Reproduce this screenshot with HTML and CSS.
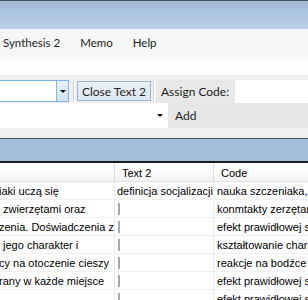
FILE: index.html
```html
<!DOCTYPE html>
<html>
<head>
<meta charset="utf-8">
<link rel="stylesheet" href="styles.css">
</head>
<body>
<div class="app">
  <div class="titlebar"></div>
  <div class="menubar">
    <span class="menu m1">Synthesis 2</span>
    <span class="menu m2">Memo</span>
    <span class="menu m3">Help</span>
  </div>
  <div class="blank"></div>
  <div class="tb1">
    <div class="combo">
      <div class="combo-field"></div>
      <div class="combo-btn"><span class="arrow"></span></div>
    </div>
    <div class="sep"></div>
    <div class="btn">Close Text 2</div>
    <div class="sep2"></div>
    <div class="label">Assign Code:</div>
    <div class="fill"></div>
  </div>
  <div class="tb2">
    <div class="combo2"><span class="arrow a2"></span></div>
    <div class="add">Add</div>
  </div>
  <div class="strip"></div>
  <div class="band"></div>
  <div class="grid">
    <div class="hrow">
      <div class="hc c1"></div>
      <div class="hc c2">Text 2</div>
      <div class="hc c3">Code</div>
    </div>
    <div class="row"><div class="cell c1 clip">iaki uczą się</div><div class="cell c2">definicja socjalizacji</div><div class="cell c3">nauka szczeniaka, z</div></div>
    <div class="row"><div class="cell c1">&nbsp;zwierzętami oraz</div><div class="cell c2"><span class="bar"></span></div><div class="cell c3">konmtakty zerzętami</div></div>
    <div class="row"><div class="cell c1 clip">zenia. Doświadczenia z</div><div class="cell c2"><span class="bar"></span></div><div class="cell c3">efekt prawidłowej s</div></div>
    <div class="row"><div class="cell c1">&nbsp;jego charakter i</div><div class="cell c2"><span class="bar"></span></div><div class="cell c3">kształtowanie charak</div></div>
    <div class="row"><div class="cell c1 clip">cy na otoczenie cieszy</div><div class="cell c2"><span class="bar"></span></div><div class="cell c3">reakcje na bodźce</div></div>
    <div class="row"><div class="cell c1 clip">rany w każde miejsce</div><div class="cell c2"><span class="bar"></span></div><div class="cell c3">efekt prawidłowej s</div></div>
    <div class="row"><div class="cell c1"></div><div class="cell c2"><span class="bar"></span></div><div class="cell c3">efekt prawidłowej s</div></div>
  </div>
</div>
</body>
</html>
```
FILE: styles.css
```css
* { box-sizing: border-box; }
html, body { margin: 0; padding: 0; }
body { width: 308px; height: 300px; overflow: hidden; background: #fff; }
.app { width: 308px; display: flex; flex-direction: column; }

.titlebar {
  height: 29px;
  border-top: 1px solid #46525c;
  background: linear-gradient(#9fbad7, #aac3df 40%, #bcd1e9);
}
.menubar {
  height: 24px;
  background: #f5f6f7;
  display: flex;
  align-items: center;
  padding-top: 2px;
  font-family: "Lato", "Open Sans", sans-serif;
  font-size: 11.5px;
  color: #1e1e1e;
}
.menu { display: block; }
.m1 { margin-left: 3px; }
.m2 { margin-left: 20px; }
.m3 { margin-left: 20px; }

.blank {
  height: 22px;
  background: linear-gradient(#f6f6f6, #fcfcfc 40%, #fff);
}

.tb1 {
  height: 28px;
  background: #f0f0f0;
  padding-top: 5px;
  display: flex;
  align-items: flex-start;
  font-family: "Lato", "Open Sans", sans-serif;
  font-size: 12px;
  color: #1e1e1e;
}
.combo {
  width: 69px;
  height: 22px;
  display: flex;
  border: 1px solid #7eb4ea;
  border-left: none;
  background: #fff;
}
.combo-field { flex: 1; }
.combo-btn {
  width: 12px;
  border-left: 1px solid #7eb4ea;
  background: linear-gradient(#e6f0fa, #cfe2f6);
  display: flex;
  align-items: center;
  justify-content: center;
}
.arrow {
  width: 0; height: 0;
  border-left: 3px solid transparent;
  border-right: 3px solid transparent;
  border-top: 3px solid #111;
}
.sep {
  width: 2px;
  height: 20px;
  margin: 1px 2px 0 4px;
  border-left: 1px solid #d0d0d0;
  border-right: 1px solid #fff;
}
.btn {
  width: 74px;
  height: 20px;
  margin-top: 1px;
  border: 1px solid #9ab5d3;
  background: linear-gradient(#eaf0f7, #dde7f2);
  display: flex;
  align-items: center;
  justify-content: center;
  padding-top: 1px;
}
.sep2 {
  width: 2px;
  height: 20px;
  margin: 1px 1px 0 2px;
  border-left: 1px solid #d0d0d0;
  border-right: 1px solid #fff;
}
.label {
  width: 79px;
  height: 23px;
  background: #e8e8e8;
  display: flex;
  align-items: center;
  padding-left: 5px;
}
.fill {
  flex: 1;
  height: 23px;
  background: #fff;
}

.tb2 {
  height: 25px;
  display: flex;
  font-family: "Lato", "Open Sans", sans-serif;
  font-size: 12px;
  color: #1e1e1e;
}
.combo2 {
  width: 168px;
  background: #fff;
  display: flex;
  align-items: center;
  justify-content: flex-end;
  padding-right: 5px;
}
.add {
  flex: 1;
  background: #e6e6e6;
  display: flex;
  align-items: center;
  padding-left: 7px;
}

.strip { height: 10px; background: #f0f0f0; }
.band {
  height: 25px;
  border-top: 1px solid #4b5660;
  border-bottom: 2px solid #1c1c1c;
  background: #a4bdd9;
}

.grid {
  font-family: "Liberation Sans", Arial, sans-serif;
  font-size: 11px;
  color: #000;
}
.hrow {
  height: 19px;
  display: flex;
  background: linear-gradient(#fff, #fbfbfb 60%, #f1f2f3);
  border-bottom: 1px solid #e2e2e2;
}
.hc {
  display: flex;
  align-items: center;
  border-right: 1px solid #dcdcdc;
  padding-top: 1px;
}
.hc.c2 { padding-left: 7px; }
.hc.c3 { padding-left: 7px; }
.c1 { width: 115px; flex: none; }
.c2 { width: 99px; flex: none; }
.c3 { flex: 1; border-right: none; }
.row {
  height: 18px;
  display: flex;
  border-bottom: 1px solid #efefef;
}
.cell {
  white-space: nowrap;
  overflow: hidden;
  display: flex;
  align-items: center;
  border-right: 1px solid #ececec;
}
.cell.c2 { padding-left: 2px; }
.cell.c3 { padding-left: 3px; border-right: none; }
.clip { text-indent: -1px; }
.bar {
  display: block;
  width: 2px;
  height: 12px;
  margin-left: 1px;
  background: #a9a9a9;
}
```
